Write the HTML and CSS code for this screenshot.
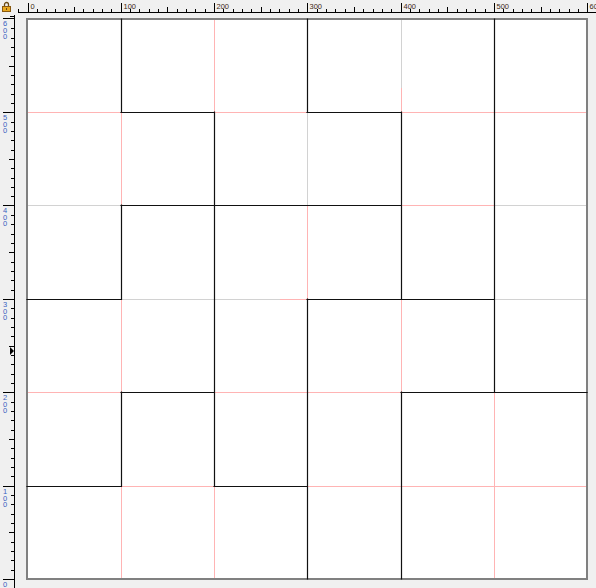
FILE: index.html
```html
<!DOCTYPE html>
<html>
<head>
<meta charset="utf-8">
<link rel="stylesheet" href="styles.css">
</head>
<body>
<div class="app">
  <div class="corner">
    <svg width="16" height="14" viewBox="0 0 16 14">
      <path class="shackle" d="M4.5 6.5 V4.5 A2 2 0 0 1 8.5 4.5 V6.5"/>
      <rect class="lockbody" x="2.5" y="6.5" width="8" height="5"/>
      <rect class="keyhole" x="6" y="8" width="1" height="2"/>
    </svg>
  </div>
  <div class="hruler">
    <svg width="580" height="14" viewBox="16 0 580 14">
      <path class="tick" d="M18 12.5 H596 M18.5 9 V12"/>
      <path class="tick" d="M37.5 9v3M46.5 9v3M55.5 9v3M65.5 9v3M83.5 9v3M93.5 9v3M102.5 9v3M111.5 9v3
        M130.5 9v3M139.5 9v3M149.5 9v3M158.5 9v3M177.5 9v3M186.5 9v3M195.5 9v3M205.5 9v3
        M223.5 9v3M233.5 9v3M242.5 9v3M251.5 9v3M270.5 9v3M279.5 9v3M289.5 9v3M298.5 9v3
        M317.5 9v3M326.5 9v3M335.5 9v3M345.5 9v3M363.5 9v3M373.5 9v3M382.5 9v3M391.5 9v3
        M410.5 9v3M419.5 9v3M429.5 9v3M438.5 9v3M457.5 9v3M466.5 9v3M475.5 9v3M485.5 9v3
        M503.5 9v3M513.5 9v3M522.5 9v3M531.5 9v3M550.5 9v3M559.5 9v3M569.5 9v3M578.5 9v3"/>
      <path class="tick" d="M74.5 7v5M167.5 7v5M261.5 7v5M354.5 7v5M447.5 7v5M541.5 7v5"/>
      <path class="tick" d="M28.5 3v9M121.5 3v9M214.5 3v9M307.5 3v9M401.5 3v9M494.5 3v9M587.5 3v9"/>
      <text class="hlabel" x="30.5" y="9">0</text>
      <text class="hlabel" x="123.5" y="9">100</text>
      <text class="hlabel" x="216.5" y="9">200</text>
      <text class="hlabel" x="309.5" y="9">300</text>
      <text class="hlabel" x="403.5" y="9">400</text>
      <text class="hlabel" x="496.5" y="9">500</text>
      <text class="hlabel" x="589.5" y="9">600</text>
    </svg>
  </div>
  <div class="vruler">
    <svg width="16" height="574" viewBox="0 14 16 574">
      <path class="tick" d="M14.5 15 V588 M10 16.5 H14"/>
      <path class="tick" d="M11 570.5h3M11 560.5h3M11 551.5h3M11 542.5h3M11 523.5h3M11 514.5h3M11 504.5h3M11 495.5h3
        M11 476.5h3M11 467.5h3M11 458.5h3M11 448.5h3M11 430.5h3M11 420.5h3M11 411.5h3M11 402.5h3
        M11 383.5h3M11 374.5h3M11 364.5h3M11 355.5h3M11 336.5h3M11 327.5h3M11 318.5h3M11 308.5h3
        M11 290.5h3M11 280.5h3M11 271.5h3M11 262.5h3M11 243.5h3M11 234.5h3M11 224.5h3M11 215.5h3
        M11 196.5h3M11 187.5h3M11 178.5h3M11 168.5h3M11 150.5h3M11 140.5h3M11 131.5h3M11 122.5h3
        M11 103.5h3M11 94.5h3M11 84.5h3M11 75.5h3M11 56.5h3M11 47.5h3M11 38.5h3M11 28.5h3"/>
      <path class="tick" d="M9 532.5h5M9 439.5h5M9 346.5h5M9 252.5h5M9 159.5h5M9 66.5h5"/>
      <path class="tick" d="M3 18.5h11M3 112.5h11M3 205.5h11M3 299.5h11M3 392.5h11M3 486.5h11M3 579.5h11"/>
      <polygon class="marker" points="10,347 14,351 10,355"/>
      <text class="vlabel"><tspan x="3" y="26">6</tspan><tspan x="3" y="32.5">0</tspan><tspan x="3" y="39">0</tspan></text>
      <text class="vlabel"><tspan x="3" y="120">5</tspan><tspan x="3" y="126.5">0</tspan><tspan x="3" y="133">0</tspan></text>
      <text class="vlabel"><tspan x="3" y="213">4</tspan><tspan x="3" y="219.5">0</tspan><tspan x="3" y="226">0</tspan></text>
      <text class="vlabel"><tspan x="3" y="307">3</tspan><tspan x="3" y="313.5">0</tspan><tspan x="3" y="320">0</tspan></text>
      <text class="vlabel"><tspan x="3" y="400">2</tspan><tspan x="3" y="406.5">0</tspan><tspan x="3" y="413">0</tspan></text>
      <text class="vlabel"><tspan x="3" y="494">1</tspan><tspan x="3" y="500.5">0</tspan><tspan x="3" y="507">0</tspan></text>
      <text class="vlabel" x="3" y="587">0</text>
    </svg>
  </div>
  <div class="stage">
    <svg width="580" height="574" viewBox="16 14 580 574">
      <rect class="paper" x="27" y="19" width="560" height="560"/>
      <path class="grid-pink" d="M121.5 20 V578 M214.5 20 V578 M307.5 20 V578 M401.5 20 V578 M494.5 20 V578
        M28 112.5 H586 M28 205.5 H586 M28 299.5 H586 M28 392.5 H586 M28 486.5 H586"/>
      <path class="grid-gray" d="M28 205.5 H121 M122 299.5 H280 M401.5 20 V88 M307.5 113 V205 M495 205.5 H586 M495 299.5 H586"/>
      <path class="wall" d="M121.5 19 V112.5 M121.5 205 V299.5 M121.5 392 V486.5
        M121 112.5 H214.5 M307 112.5 H401.5
        M214.5 112 V486.5
        M307.5 19 V112.5 M307.5 299 V579
        M401.5 112 V299.5 M401.5 392 V579
        M494.5 19 V392.5
        M121 205.5 H401.5
        M27 299.5 H121.5 M307 299.5 H494.5
        M121 392.5 H214.5 M401 392.5 H587
        M27 486.5 H121.5 M214 486.5 H307.5"/>
    </svg>
  </div>
</div>
</body>
</html>
```

FILE: styles.css
```css
html, body {
  margin: 0;
  padding: 0;
}

body {
  width: 596px;
  height: 588px;
  overflow: hidden;
  background: #f0f0f0;
  font-family: "Liberation Sans", Arial, sans-serif;
}

.app {
  display: grid;
  grid-template-columns: 16px 580px;
  grid-template-rows: 14px 574px;
  background: #f0f0f0;
}

.app svg {
  display: block;
  overflow: hidden;
}

.tick {
  fill: none;
  stroke: #000;
  stroke-width: 1;
  shape-rendering: crispEdges;
}

.hlabel {
  font-size: 7.5px;
  fill: #402a14;
}

.vlabel {
  font-size: 7.5px;
  fill: #3a62c0;
}

.marker {
  fill: #000;
}

.shackle {
  fill: none;
  stroke: #6b4a14;
  stroke-width: 1.3;
}

.lockbody {
  fill: #e8a820;
  stroke: #8a5a10;
  stroke-width: 1;
}

.keyhole {
  fill: #6b4a14;
}

.paper {
  fill: #fff;
  stroke: #808080;
  stroke-width: 2;
}

.grid-pink {
  fill: none;
  stroke: #ffb4b4;
  stroke-width: 1;
  shape-rendering: crispEdges;
}

.grid-gray {
  fill: none;
  stroke: #d2d2d2;
  stroke-width: 1;
  shape-rendering: crispEdges;
}

.wall {
  fill: none;
  stroke: #111;
  stroke-width: 1.2;
  stroke-linecap: square;
}
```
